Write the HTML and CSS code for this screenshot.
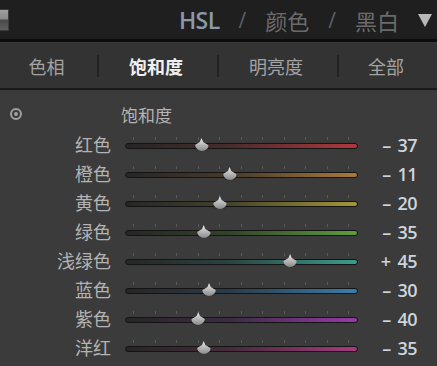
FILE: index.html
```html
<!DOCTYPE html>
<html lang="zh-CN">
<head>
    <meta charset="UTF-8">
    <title>HSL 饱和度</title>
    <link rel="stylesheet" href="styles.css">
</head>
<body>
    <div class="header">
        <div class="panel-switch"></div>
        <div class="modes">
            <span class="mode active">HSL</span>
            <span class="slash">/</span>
            <span class="mode">颜色</span>
            <span class="slash">/</span>
            <span class="mode">黑白</span>
            <span class="collapse"></span>
        </div>
    </div>

    <div class="tabs">
        <div class="tab">色相</div>
        <div class="tab current">饱和度</div>
        <div class="tab">明亮度</div>
        <div class="tab">全部</div>
    </div>

    <div class="panel">
        <div class="title-row">
            <span class="target"></span>
            <span class="title">饱和度</span>
        </div>

        <div class="row">
            <span class="label">红色</span>
            <div class="slider"><div class="ticks"><i></i><i></i><i></i><i></i><i></i><i></i><i></i><i></i><i></i><i></i><i></i></div><div class="track red"></div><span class="thumb" style="left: 69.5px"></span></div>
            <span class="value">– 37</span>
        </div>
        <div class="row">
            <span class="label">橙色</span>
            <div class="slider"><div class="ticks"><i></i><i></i><i></i><i></i><i></i><i></i><i></i><i></i><i></i><i></i><i></i></div><div class="track orange"></div><span class="thumb" style="left: 97.6px"></span></div>
            <span class="value">– 11</span>
        </div>
        <div class="row">
            <span class="label">黄色</span>
            <div class="slider"><div class="ticks"><i></i><i></i><i></i><i></i><i></i><i></i><i></i><i></i><i></i><i></i><i></i></div><div class="track yellow"></div><span class="thumb" style="left: 87.9px"></span></div>
            <span class="value">– 20</span>
        </div>
        <div class="row">
            <span class="label">绿色</span>
            <div class="slider"><div class="ticks"><i></i><i></i><i></i><i></i><i></i><i></i><i></i><i></i><i></i><i></i><i></i></div><div class="track green"></div><span class="thumb" style="left: 71.7px"></span></div>
            <span class="value">– 35</span>
        </div>
        <div class="row">
            <span class="label">浅绿色</span>
            <div class="slider"><div class="ticks"><i></i><i></i><i></i><i></i><i></i><i></i><i></i><i></i><i></i><i></i><i></i></div><div class="track aqua"></div><span class="thumb" style="left: 158.1px"></span></div>
            <span class="value">+ 45</span>
        </div>
        <div class="row">
            <span class="label">蓝色</span>
            <div class="slider"><div class="ticks"><i></i><i></i><i></i><i></i><i></i><i></i><i></i><i></i><i></i><i></i><i></i></div><div class="track blue"></div><span class="thumb" style="left: 77.1px"></span></div>
            <span class="value">– 30</span>
        </div>
        <div class="row">
            <span class="label">紫色</span>
            <div class="slider"><div class="ticks"><i></i><i></i><i></i><i></i><i></i><i></i><i></i><i></i><i></i><i></i><i></i></div><div class="track purple"></div><span class="thumb" style="left: 66.3px"></span></div>
            <span class="value">– 40</span>
        </div>
        <div class="row">
            <span class="label">洋红</span>
            <div class="slider"><div class="ticks"><i></i><i></i><i></i><i></i><i></i><i></i><i></i><i></i><i></i><i></i><i></i></div><div class="track magenta"></div><span class="thumb" style="left: 71.7px"></span></div>
            <span class="value">– 35</span>
        </div>
    </div>
</body>
</html>
```

FILE: styles.css
```css
body {
    margin: 0;
    width: 437px;
    height: 366px;
    overflow: hidden;
    background: #3b3b3b;
    font-family: "Noto Sans CJK SC", "Liberation Sans", sans-serif;
}
.header {
    height: 39px;
    background: #1f1f1f;
    border-bottom: 3px solid #0c0c0c;
    display: flex;
    align-items: center;
}
.panel-switch {
    width: 8px;
    height: 20px;
    border: 1px solid #3c3c3c;
    border-left: none;
    background: linear-gradient(#a0a0a0 0, #8a8a8a 45%, #4a4a4a 50%, #5e5e5e 100%);
}
.modes {
    margin-left: auto;
    display: flex;
    align-items: center;
    gap: 19px;
    padding-right: 5px;
}
.mode {
    font-size: 22px;
    line-height: 30px;
    color: #6b6b6b;
}
.mode.active {
    font-family: "Open Sans", "Liberation Sans", sans-serif;
    font-size: 23px;
    font-weight: 600;
    letter-spacing: -0.6px;
    color: #8a99ab;
}
.slash {
    font-family: "Open Sans", "Liberation Sans", sans-serif;
    font-size: 21px;
    color: #57606c;
}
.collapse {
    width: 0;
    height: 0;
    border-left: 7px solid transparent;
    border-right: 7px solid transparent;
    border-top: 13px solid #b8b8b8;
    margin-top: 2px;
}
.tabs {
    background: #333;
    border-top: 1px solid #3a3a3a;
    border-bottom: 2px solid #1a1a1a;
    box-sizing: border-box;
    height: 48px;
    display: grid;
    grid-template-columns: 97px 120px 120px 1fr;
    align-items: center;
}
.tab {
    text-align: center;
    font-size: 18px;
    color: #a3a3a3;
    padding-right: 4px;
    line-height: 22px;
}
.tab + .tab {
    border-left: 2px solid #222;
}
.tab.current {
    color: #f0f0f0;
    font-weight: bold;
}
.panel {
    padding-top: 10px;
}
.title-row {
    height: 28px;
    display: flex;
    align-items: center;
    margin-bottom: 3px;
}
.target {
    width: 8px;
    height: 8px;
    border: 2px solid #a0a0a0;
    border-radius: 50%;
    margin-left: 10px;
    position: relative;
}
.target::after {
    content: "";
    position: absolute;
    left: 2px;
    top: 2px;
    width: 4px;
    height: 4px;
    border-radius: 50%;
    background: #a0a0a0;
}
.title {
    margin-left: 99px;
    font-size: 17px;
    color: #b4b4b4;
}
.row {
    height: 29px;
    display: grid;
    grid-template-columns: 111px 233px 1fr;
    column-gap: 14px;
    align-items: center;
}
.label {
    text-align: right;
    font-size: 18px;
    color: #b3b3b3;
    line-height: 24px;
    margin-top: -3px;
}
.slider {
    position: relative;
    height: 29px;
}
.ticks {
    display: flex;
    justify-content: space-between;
    padding: 0 9px 0 8px;
    height: 3px;
    margin-top: 6px;
}
.ticks i {
    width: 1px;
    background: #595959;
}
.track {
    height: 4px;
    margin-top: 3px;
    border: 1px solid #141414;
    border-radius: 3px;
}
.red { background: linear-gradient(to right, #262626, #4a2c2c 45%, #b0383d); }
.orange { background: linear-gradient(to right, #262626, #48392a 45%, #aa7a38); }
.yellow { background: linear-gradient(to right, #262626, #45422a 45%, #a49838); }
.green { background: linear-gradient(to right, #262626, #32432a 45%, #5e9e3a); }
.aqua { background: linear-gradient(to right, #262626, #2a4440 45%, #3a9e8c); }
.blue { background: linear-gradient(to right, #262626, #2a3b48 45%, #3a7eac); }
.purple { background: linear-gradient(to right, #262626, #3d2a46 45%, #983aaa); }
.magenta { background: linear-gradient(to right, #262626, #462a3b 45%, #a83a80); }
.thumb {
    position: absolute;
    top: 7px;
    width: 14px;
    height: 13px;
    background: linear-gradient(#ececec, #b0b0b0 60%, #8a8a8a);
    clip-path: polygon(50% 0, 62% 30%, 100% 55%, 100% 100%, 0 100%, 0 55%, 38% 30%);
    border-radius: 0 0 7px 7px;
    filter: drop-shadow(0 0 1px #111);
}
.value {
    font-family: "Open Sans", "Liberation Sans", sans-serif;
    font-size: 18px;
    font-weight: 600;
    letter-spacing: -0.6px;
    word-spacing: 3px;
    color: #cdd4dc;
    text-align: right;
    padding-right: 20px;
    margin-top: -2px;
}
```
